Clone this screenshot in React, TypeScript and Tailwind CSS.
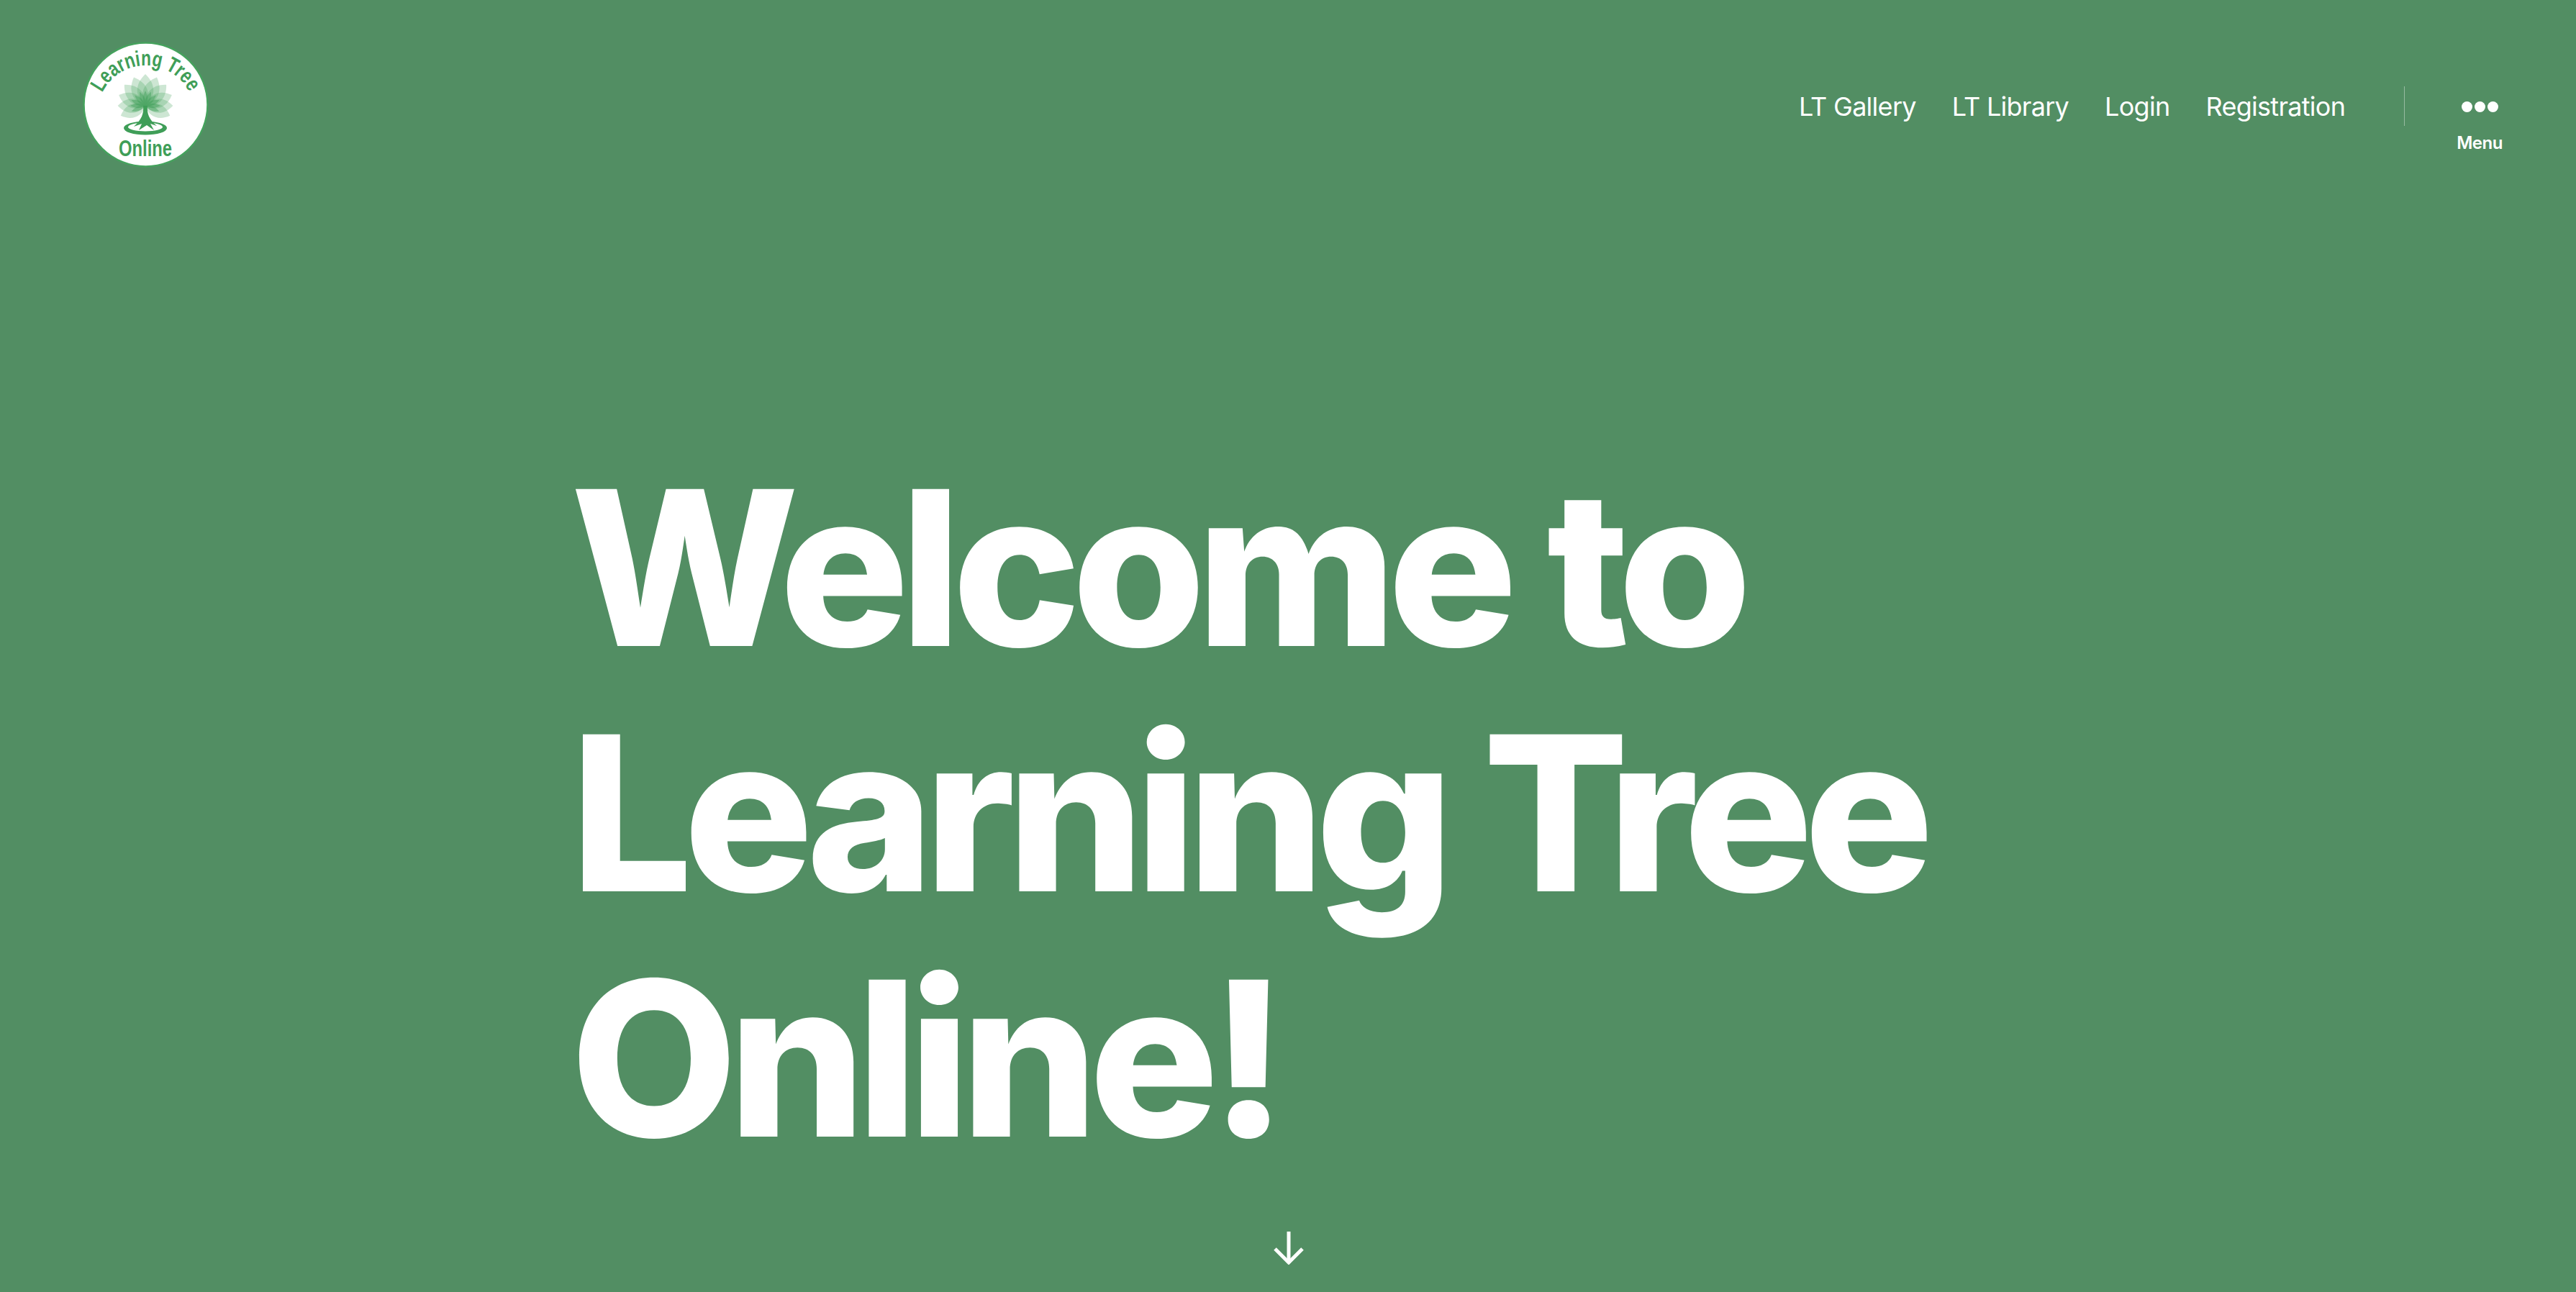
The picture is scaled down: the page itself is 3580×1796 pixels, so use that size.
const petals = [-112, -90, -68, -45, -22, 0, 22, 45, 68, 90, 112]

function Logo() {
  return (
    <svg viewBox="0 0 175 175" className="h-[175px] w-[175px] shrink-0">
      <circle cx="87.5" cy="87.5" r="86" fill="#ffffff" stroke="#45a25d" strokeWidth="2.5" />
      <defs>
        <path id="logo-arc" d="M 27 71 A 67.5 67.5 0 0 1 148 70" />
      </defs>
      <text fontFamily="'Liberation Sans', sans-serif" fontWeight="700" fontSize="30" fill="#3f9e58">
        <textPath href="#logo-arc" textLength="150" lengthAdjust="spacingAndGlyphs">Learning Tree</textPath>
      </text>
      <text x="87" y="159" textAnchor="middle" fontFamily="'Liberation Sans', sans-serif" fontWeight="700" fontSize="31" fill="#3f9e58" textLength="74" lengthAdjust="spacingAndGlyphs">
        Online
      </text>
      {/* crown */}
      <g transform="translate(87 89)">
        {petals.map((a) => (
          <path key={a} d="M0 0 C -15 -12 -15 -30 0 -44 C 15 -30 15 -12 0 0 Z" fill="#45a25d" fillOpacity="0.27" transform={`rotate(${a}) scale(${1 - Math.abs(a) / 700})`} />
        ))}
        {petals.map((a) => (
          <path key={a} d="M0 0 C -4 -7 -4 -13 0 -21 C 4 -13 4 -7 0 0 Z" fill="#45a25d" fillOpacity="0.5" transform={`rotate(${a})`} />
        ))}
      </g>
      {/* trunk and roots */}
      <path d="M84 89 L90 89 C89 100 92 108 103 117 L94 114 L99 123 L89 116 L78 123 L82 114 L71 118 C82 108 85 100 84 89 Z" fill="#3f9e58" />
      <path fillRule="evenodd" d="M57 120 A30 9.500 0 1 0 117 120 A30 9.500 0 1 0 57 120 Z M63 118.500 A24 6 0 1 1 111 118.500 A24 6 0 1 1 63 118.500 Z" fill="#3f9e58" />
    </svg>
  )
}

export default function App() {
  return (
    <div className="flex h-[1796px] w-[3580px] flex-col overflow-hidden bg-[#528e63] font-['Inter',sans-serif] text-white">
      {/* Header */}
      <header className="flex items-start justify-between pl-[115px] pr-[102px] pt-[58px]">
        <Logo />
        <div className="flex items-start pt-[62px]">
          <nav className="flex gap-[50px] pt-[6px] text-[36px] leading-[44px] tracking-[-0.02em]">
            <a>LT Gallery</a>
            <a>LT Library</a>
            <a>Login</a>
            <a>Registration</a>
          </nav>
          <div className="ml-[82px] h-[55px] w-[1px] bg-white/40" />
          <button className="ml-[72px] flex flex-col items-center">
            <span className="mt-[21px] flex gap-[3px]">
              <span className="h-[15px] w-[15px] rounded-full bg-white" />
              <span className="h-[15px] w-[15px] rounded-full bg-white" />
              <span className="h-[15px] w-[15px] rounded-full bg-white" />
            </span>
            <span className="mt-[28px] text-[24px] font-semibold leading-[30px] tracking-[-0.02em]">Menu</span>
          </button>
        </div>
      </header>

      {/* Hero */}
      <main className="flex flex-1 flex-col pl-[793px] pt-[385px]">
        <h1 className="text-[300px] font-extrabold leading-[341px] tracking-[-0.0415em]">
          Welcome to
          <br />
          Learning Tree
          <br />
          Online!
        </h1>
        <div className="ml-[977px] mt-[71px]">
          <svg viewBox="0 0 42 46" className="h-[46px] w-[42px]" fill="none" stroke="#ffffff" strokeWidth="5">
            <path d="M21 0 V44" />
            <path d="M2 24 L21 43 L40 24" />
          </svg>
        </div>
      </main>
    </div>
  )
}
